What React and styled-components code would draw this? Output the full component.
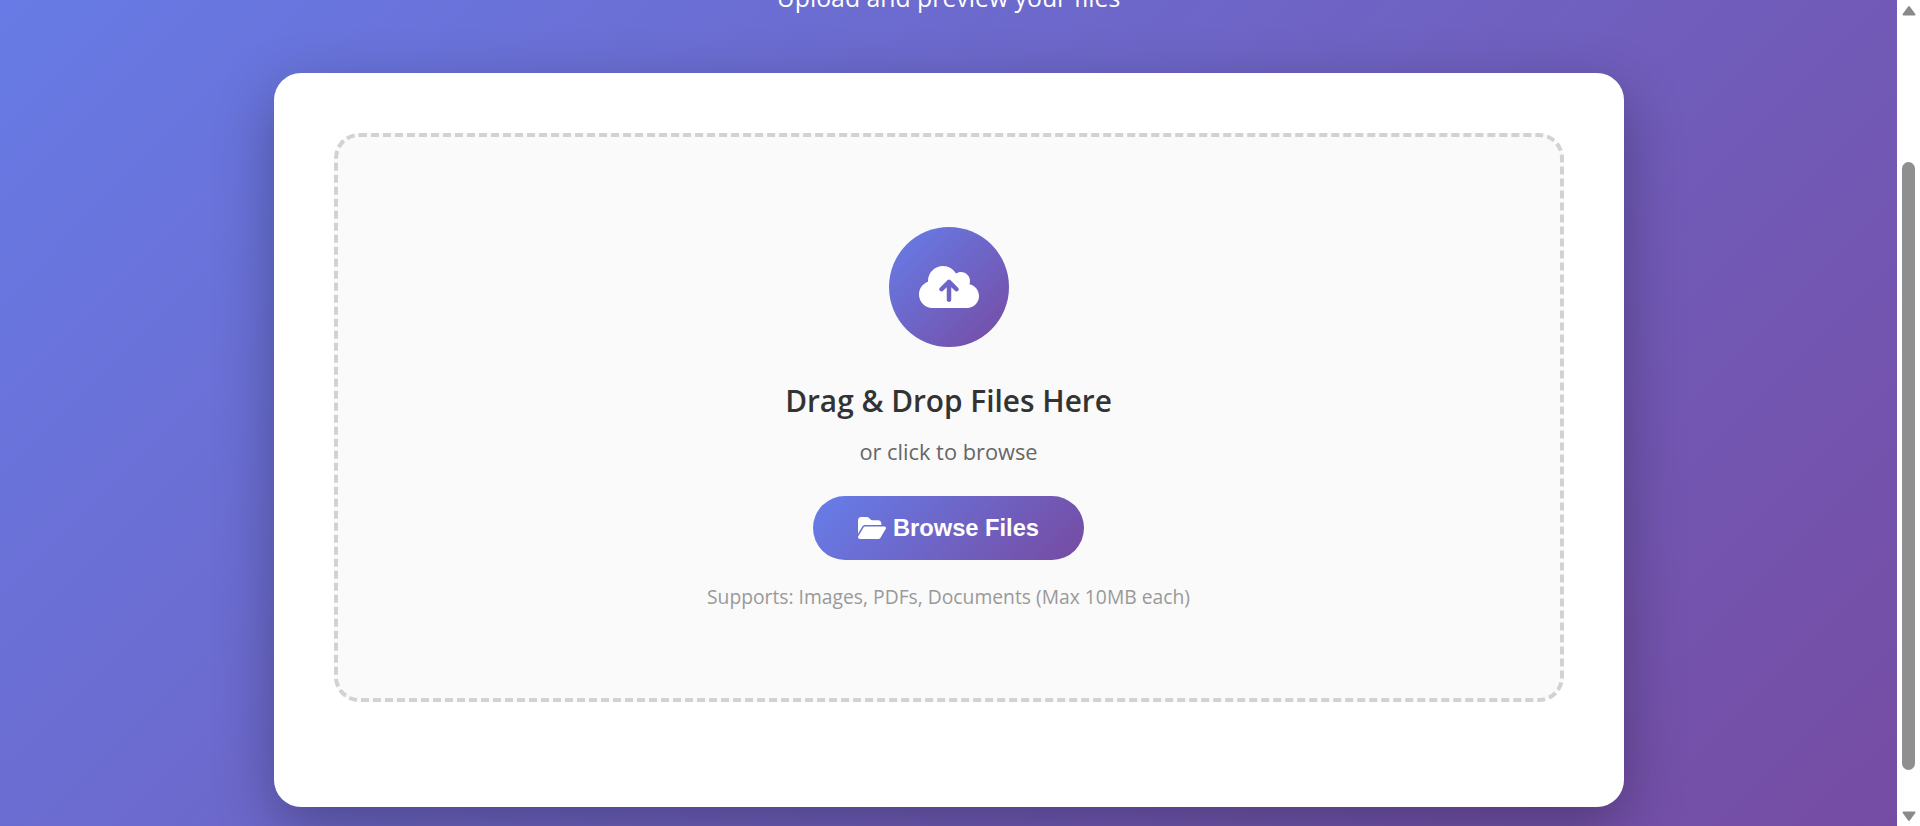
import React, { useLayoutEffect, useRef } from 'react';
import styled, { createGlobalStyle } from 'styled-components';
import { FaCloudArrowUp, FaFolderOpen } from 'react-icons/fa6';

const SCROLL_TOP = 188;

const App = () => {
  const viewportRef = useRef(null);

  useLayoutEffect(() => {
    viewportRef.current.scrollTop = SCROLL_TOP;
  }, []);

  return (
    <Page>
      <GlobalStyle />
      <Viewport ref={viewportRef}>
        <Content>
          <Header>
            <Subtitle>Upload and preview your files</Subtitle>
          </Header>
          <Card>
            <DropZone>
              <IconCircle>
                <FaCloudArrowUp />
              </IconCircle>
              <Title>Drag &amp; Drop Files Here</Title>
              <Hint>or click to browse</Hint>
              <BrowseButton type="button">
                <FaFolderOpen />
                Browse Files
              </BrowseButton>
              <Supports>Supports: Images, PDFs, Documents (Max 10MB each)</Supports>
            </DropZone>
          </Card>
        </Content>
      </Viewport>
      <ScrollBar>
        <ScrollArrow viewBox="0 0 14 11">
          <polygon points="7,2 12.5,9.5 1.5,9.5" />
        </ScrollArrow>
        <Thumb />
        <ScrollArrow $bottom viewBox="0 0 14 11">
          <polygon points="1.5,1.5 12.5,1.5 7,9" />
        </ScrollArrow>
      </ScrollBar>
    </Page>
  );
};

export default App;

const GlobalStyle = createGlobalStyle`
  * {
    box-sizing: border-box;
  }

  body {
    margin: 0;
    font-family: 'Open Sans', 'Noto Sans', sans-serif;
  }
`;

const Page = styled.div`
  display: flex;
  height: 100vh;
  overflow: hidden;
`;

const Viewport = styled.main`
  flex: 1;
  min-width: 0;
  overflow: hidden;
`;

const Content = styled.div`
  padding: 170px 0 65px;
  background: linear-gradient(135deg, #667eea 0%, #764ba2 100%);
`;

const Header = styled.header`
  margin-bottom: 60px;
  text-align: center;
`;

const Subtitle = styled.p`
  margin: 0;
  color: #fff;
  font-size: 24.8px;
  line-height: 31px;
`;

const Card = styled.section`
  width: 1350px;
  margin: 0 auto;
  padding: 60px 60px 105px;
  background: #fff;
  border-radius: 27px;
  box-shadow: 0 20px 60px rgba(0, 0, 0, 0.3);
`;

const DropZone = styled.div`
  display: flex;
  flex-direction: column;
  align-items: center;
  height: 569px;
  padding-top: 90px;
  background: #fafafa;
  border: 4px dashed #d2d2d2;
  border-radius: 25px;
`;

const IconCircle = styled.div`
  display: flex;
  align-items: center;
  justify-content: center;
  width: 120px;
  height: 120px;
  margin-bottom: 34px;
  color: #fff;
  font-size: 60px;
  background: linear-gradient(135deg, #667eea 0%, #764ba2 100%);
  border-radius: 50%;
`;

const Title = styled.h2`
  margin: 0 0 16px;
  color: #333;
  font-size: 29.8px;
  font-weight: 600;
  line-height: 40px;
`;

const Hint = styled.p`
  margin: 0 0 29px;
  color: #666;
  font-size: 21.8px;
  line-height: 30px;
`;

const BrowseButton = styled.button`
  display: flex;
  align-items: center;
  justify-content: center;
  gap: 7px;
  width: 271px;
  height: 64px;
  margin-bottom: 23px;
  padding: 0;
  color: #fff;
  font-family: 'Liberation Sans', Arial, sans-serif;
  font-size: 23.7px;
  font-weight: 700;
  background: linear-gradient(135deg, #667eea 0%, #764ba2 100%);
  border: 0;
  border-radius: 32px;

  svg {
    font-size: 28px;
  }
`;

const Supports = styled.p`
  margin: 0;
  color: #999;
  font-size: 19.3px;
  line-height: 27px;
`;

const ScrollBar = styled.div`
  display: flex;
  flex-direction: column;
  align-items: center;
  flex: 0 0 23px;
  padding: 5px 0 4px;
  background: #fff;
`;

const ScrollArrow = styled.svg`
  flex: none;
  width: 14px;
  height: 11px;
  margin-top: ${({ $bottom }) => ($bottom ? 'auto' : '0')};
  fill: #8a8a8a;
  stroke: #8a8a8a;
  stroke-width: 2;
  stroke-linejoin: round;
`;

const Thumb = styled.div`
  flex: none;
  width: 13px;
  height: 608px;
  margin-top: 146px;
  background: #8f8f8f;
  border-radius: 7px;
`;
